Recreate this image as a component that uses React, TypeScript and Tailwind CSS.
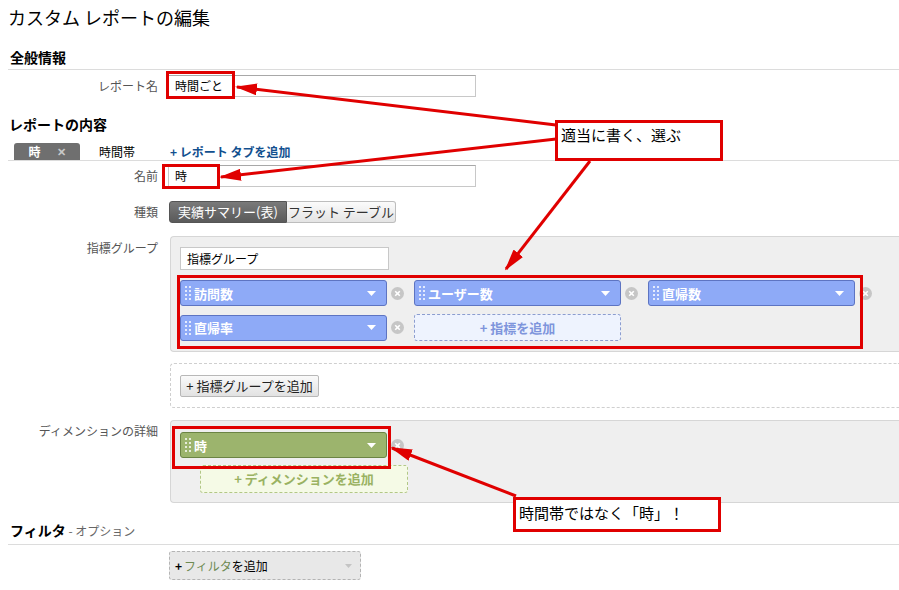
import React from "react";

const FONT = { fontFamily: '"Noto Sans CJK JP", "Noto Sans", sans-serif' };

const Grip = () => (
  <svg width="6" height="16" viewBox="0 0 6 16" className="shrink-0">
    {[1, 5, 9, 13].map((y) => (
      <React.Fragment key={y}>
        <rect x="0" y={y} width="2" height="2" fill="#ffffff" opacity="0.75" />
        <rect x="4" y={y} width="2" height="2" fill="#ffffff" opacity="0.75" />
      </React.Fragment>
    ))}
  </svg>
);

const Caret = () => (
  <svg width="9" height="5" viewBox="0 0 9 5" className="ml-auto shrink-0">
    <path d="M0 0 L9 0 L4.5 5 Z" fill="#ffffff" />
  </svg>
);

const RemoveIcon = () => (
  <svg width="13" height="13" viewBox="0 0 13 13" className="shrink-0">
    <circle cx="6.5" cy="6.5" r="6.5" fill="#c6c6c6" />
    <path d="M4.2 4.2 L8.8 8.8 M8.8 4.2 L4.2 8.8" stroke="#ffffff" strokeWidth="1.6" />
  </svg>
);

type ChipProps = { text: string; color?: "blue" | "green" };

const Chip = ({ text, color = "blue" }: ChipProps) => (
  <div className="flex items-center">
    <div
      className={
        "w-[207px] h-[26px] rounded-[3px] border flex items-center pl-[4px] pr-[10px] text-white font-bold text-[13px] " +
        (color === "blue" ? "bg-[#8eaaf7] border-[#5d74c2]" : "bg-[#9cb46d] border-[#6b8444]")
      }
    >
      <Grip />
      <span className="ml-[3px] leading-none">{text}</span>
      <Caret />
    </div>
    <div className="ml-[4px]">
      <RemoveIcon />
    </div>
  </div>
);

const Label = ({ text, className = "" }: { text: string; className?: string }) => (
  <div className={"w-[158px] shrink-0 text-right text-[12px] text-[#555] " + className}>{text}</div>
);

const App = () => {
  return (
    <div className="relative w-[899px] h-[590px] overflow-hidden bg-white text-black" style={FONT}>
      <div className="pl-[8px] pt-[5px] text-[18px] leading-[24px]">カスタム レポートの編集</div>

      {/* 全般情報 */}
      <div className="ml-[8px] mt-[18px] border-b border-[#dcdcdc] pl-[2px] pb-[2px] text-[14px] font-bold leading-[20px]">
        全般情報
      </div>
      <div className="flex items-center mt-[5px]">
        <Label text="レポート名" />
        <div className="ml-[10px] w-[308px] h-[22px] border border-[#c8c8c8] border-t-[#a8a8a8] flex items-center px-[6px] text-[12px]">
          時間ごと
        </div>
      </div>

      {/* レポートの内容 */}
      <div className="ml-[8px] mt-[17px] pl-[1px] text-[14px] font-bold leading-[20px]">レポートの内容</div>
      <div className="ml-[8px] mt-[9px] border-b border-[#dcdcdc] flex items-end pl-[6px] text-[12px]">
        <div className="w-[66px] h-[17px] bg-[#6f6f6f] rounded-t-[3px] flex items-center justify-center gap-[16px] text-white font-bold leading-none">
          <span>時</span>
          <span className="text-[#c8c8c8] text-[11px]">✕</span>
        </div>
        <div className="ml-[19px] h-[17px] flex items-center leading-none">時間帯</div>
        <div className="ml-[35px] h-[17px] flex items-center leading-none font-bold text-[#12508f]">
          + レポート タブを追加
        </div>
      </div>

      <div className="flex items-center mt-[4px]">
        <Label text="名前" />
        <div className="ml-[10px] w-[308px] h-[22px] border border-[#c8c8c8] border-t-[#a8a8a8] flex items-center px-[6px] text-[12px]">
          時
        </div>
      </div>

      <div className="flex items-center mt-[14px]">
        <Label text="種類" />
        <div className="ml-[11px] flex h-[22px] text-[13px]">
          <div className="w-[118px] rounded-l-[3px] border border-[#555] bg-gradient-to-b from-[#7a7a7a] to-[#5a5a5a] text-white flex items-center justify-center">
            実績サマリー(表)
          </div>
          <div className="w-[109px] rounded-r-[3px] border border-l-0 border-[#bdbdbd] bg-gradient-to-b from-[#fbfbfb] to-[#e4e4e4] text-[#333] flex items-center justify-center">
            フラット テーブル
          </div>
        </div>
      </div>

      {/* 指標グループ */}
      <div className="flex mt-[13px]">
        <Label text="指標グループ" className="pt-[3px]" />
        <div className="ml-[12px] flex-1 h-[116px] bg-[#efefef] border border-r-0 border-[#d6d6d6] rounded-l-[4px] pl-[9px] pt-[10px]">
          <div className="w-[209px] h-[23px] bg-white border border-[#c8c8c8] flex items-center px-[6px] text-[12px]">
            指標グループ
          </div>
          <div className="mt-[10px] grid grid-cols-[repeat(3,234px)] gap-y-[8px]">
            <Chip text="訪問数" />
            <Chip text="ユーザー数" />
            <Chip text="直帰数" />
            <Chip text="直帰率" />
            <div className="w-[207px] h-[27px] rounded-[3px] border border-dashed border-[#8c9dcf] bg-[#eef3fe] flex items-center justify-center text-[13px] font-bold text-[#7e95dc]">
              + 指標を追加
            </div>
          </div>
        </div>
      </div>

      <div className="flex mt-[11px]">
        <div className="w-[158px] shrink-0" />
        <div className="ml-[12px] flex-1 h-[45px] border border-r-0 border-dashed border-[#cfcfcf] rounded-l-[4px] pl-[9px] pt-[11px]">
          <div className="w-[139px] h-[22px] rounded-[2px] border border-[#b8b8b8] bg-gradient-to-b from-[#fafafa] to-[#e2e2e2] flex items-center justify-center text-[13px] text-[#222]">
            + 指標グループを追加
          </div>
        </div>
      </div>

      {/* ディメンション */}
      <div className="flex mt-[12px]">
        <Label text="ディメンションの詳細" className="pt-[2px]" />
        <div className="ml-[12px] flex-1 h-[83px] bg-[#efefef] border border-r-0 border-[#d6d6d6] rounded-l-[4px] pl-[9px] pt-[11px]">
          <Chip text="時" color="green" />
          <div className="ml-[20px] mt-[7px] w-[208px] h-[28px] rounded-[3px] border border-dashed border-[#b2c786] bg-[#f5fae6] flex items-center justify-center text-[13px] font-bold text-[#9ab262]">
            + ディメンションを追加
          </div>
        </div>
      </div>

      {/* フィルタ */}
      <div className="ml-[8px] mt-[16px] border-b border-[#dcdcdc] pl-[2px] pb-[3px] leading-[20px]">
        <span className="text-[14px] font-bold">フィルタ</span>
        <span className="text-[12px] text-[#666]"> - オプション</span>
      </div>
      <div className="flex mt-[6px]">
        <div className="w-[158px] shrink-0" />
        <div className="ml-[11px] w-[192px] h-[29px] rounded-[3px] border border-dashed border-[#b4b4b4] bg-[#e8e8e8] flex items-center pl-[5px] pr-[8px] text-[12px]">
          <span className="font-bold">+</span>
          <span className="ml-[2px] text-[#6e8a52]">フィルタ</span>
          <span>を追加</span>
          <svg width="7" height="4" viewBox="0 0 7 4" className="ml-auto">
            <path d="M0 0 L7 0 L3.5 4 Z" fill="#c4c4c4" />
          </svg>
        </div>
      </div>

      {/* annotations */}
      <div className="absolute left-[166px] top-[71px] w-[69px] h-[28px] border-[3px] border-[#e00000]" />
      <div className="absolute left-[162px] top-[164px] w-[58px] h-[25px] border-[3px] border-[#e00000]" />
      <div className="absolute left-[177px] top-[275px] w-[686px] h-[74px] border-[3px] border-[#e00000]" />
      <div className="absolute left-[172px] top-[426px] w-[219px] h-[43px] border-[3px] border-[#e00000]" />

      <svg className="absolute left-0 top-0 pointer-events-none" width="899" height="590">
        <defs>
          <marker
            id="ah"
            markerWidth="22"
            markerHeight="12"
            refX="20"
            refY="6"
            orient="auto"
            markerUnits="userSpaceOnUse"
          >
            <path d="M0 0 L22 6 L0 12 Z" fill="#e00000" />
          </marker>
        </defs>
        <g stroke="#e00000" strokeWidth="3" fill="none">
          <line x1="556" y1="125" x2="237" y2="87" markerEnd="url(#ah)" />
          <line x1="556" y1="139" x2="221" y2="177" markerEnd="url(#ah)" />
          <line x1="590" y1="161" x2="506" y2="269" markerEnd="url(#ah)" />
          <line x1="516" y1="496" x2="392" y2="448" markerEnd="url(#ah)" />
        </g>
      </svg>

      <div className="absolute left-[555px] top-[120px] w-[168px] h-[41px] bg-white border-[3px] border-[#e00000] px-[3px] pt-[1px] text-[15px] leading-[22px]">
        適当に書く、選ぶ
      </div>
      <div className="absolute left-[513px] top-[497px] w-[208px] h-[35px] bg-white border-[3px] border-[#e00000] px-[3px] pt-[2px] text-[15px] leading-[22px]">
        時間帯ではなく「時」！
      </div>
    </div>
  );
};

export default App;
